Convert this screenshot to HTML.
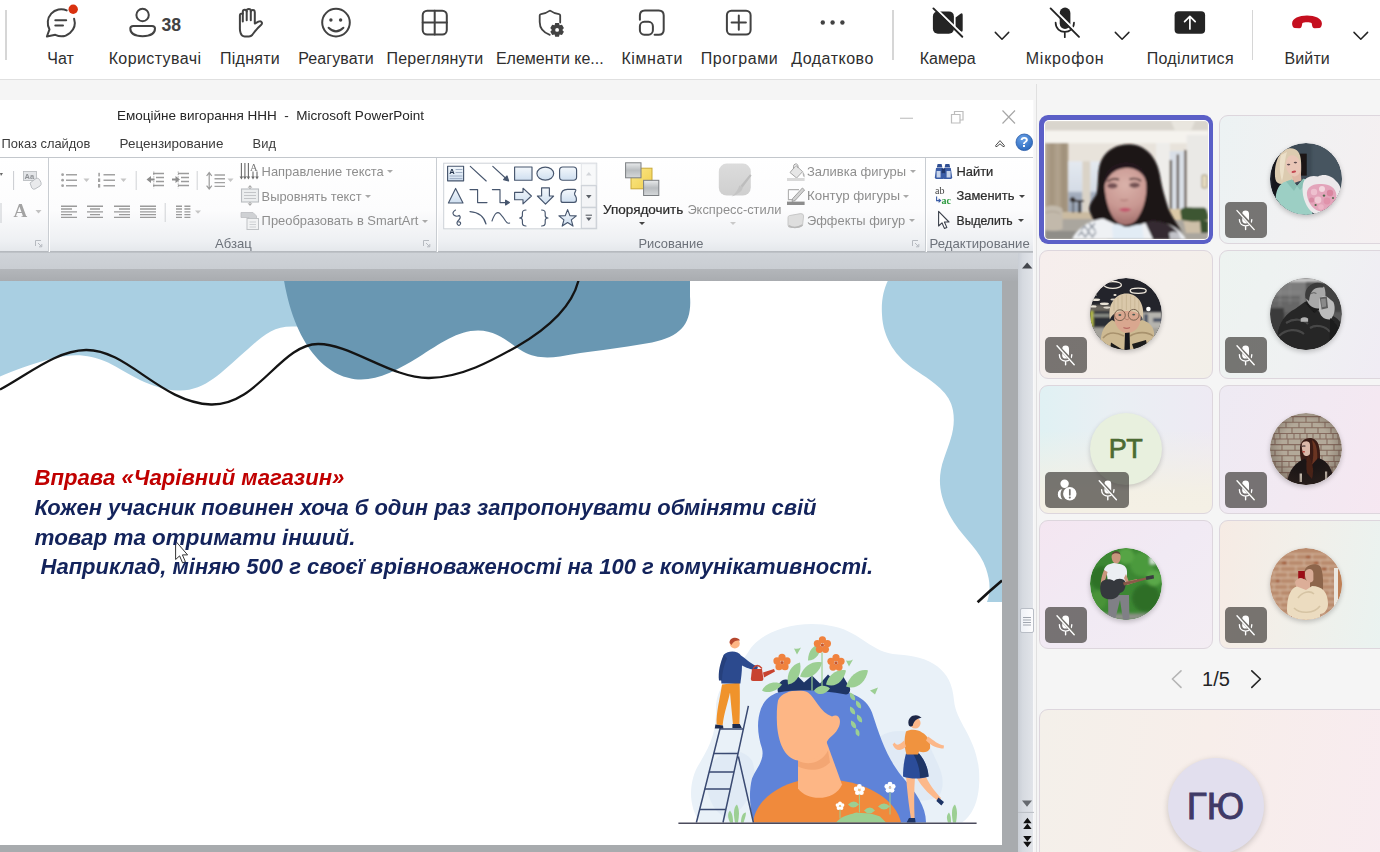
<!DOCTYPE html>
<html lang="uk">
<head>
<meta charset="utf-8">
<title>Teams meeting</title>
<style>
*{box-sizing:border-box;margin:0;padding:0}
html,body{width:1380px;height:852px;overflow:hidden;background:#f5f5f5;font-family:"Liberation Sans",sans-serif;color:#242424}
#app{position:relative;width:1380px;height:852px;overflow:hidden;background:#f5f5f5}
.abs{position:absolute}
/* ---------- Teams toolbar ---------- */
#tb{position:absolute;left:0;top:0;width:1380px;height:80px;background:#fff;border-bottom:1px solid #e0e0e0}
.tl{position:absolute;top:48.8px;height:20px;line-height:20px;font-size:16px;color:#2e2e2e;white-space:nowrap;text-align:center;transform:translateX(-50%)}
.sep{position:absolute;top:10px;width:1.5px;height:50px;background:#d6d6d6}
.ic{position:absolute;overflow:visible}
/* ---------- PowerPoint window ---------- */
#ppt{position:absolute;left:0;top:100px;width:1034px;height:752px;background:#fff;overflow:hidden}
/* ---------- Gallery ---------- */
.tile{position:absolute;width:173.4px;height:128.4px;border-radius:9px;border:1px solid #ddd6dd;overflow:hidden}
.mute{position:absolute;width:41.6px;height:35.8px;border-radius:5px;background:rgba(54,52,48,.66)}
.av{position:absolute;left:50px;top:28px;width:72px;height:72px;border-radius:50%;overflow:hidden;box-shadow:0 2px 5px rgba(0,0,0,.22)}
</style>
</head>
<body>
<div id="app">

<!-- TOOLBAR -->
<div id="tb">
<div class="sep" style="left:5px"></div>
<div class="sep" style="left:892px"></div>
<div class="sep" style="left:1251.5px"></div>
<svg class="ic" style="left:0;top:0" width="1380" height="80" viewBox="0 0 1380 80" fill="none" stroke="#424242" stroke-width="2" stroke-linecap="round" stroke-linejoin="round">
<!-- chat -->
<path d="M66.7 10.4 A13.5 13.5 0 0 0 49.5 29.4 L46.9 36.5 L55.3 34.8 A13.5 13.5 0 0 0 74.1 18.7"/>
<path d="M55.3 20.3 H66.2 M55.3 25.6 H63"/>
<circle cx="73.2" cy="9.2" r="4.7" fill="#d9310f" stroke="none"/>
<!-- people -->
<circle cx="142.6" cy="15" r="6.2"/>
<path d="M133.3 26 H152 Q155 26 155 28.6 C155 33.4 150.5 36.2 142.6 36.2 C134.8 36.2 130.3 33.4 130.3 28.6 Q130.3 26 133.3 26 Z"/>
<!-- hand -->
<path d="M239.9 29 V15.6 Q239.9 13.3 242.8 13.4 V11.8 Q242.8 9.8 244.8 9.8 Q246.7 9.8 246.7 11.4 V10.6 Q246.7 8.9 248.8 8.9 Q250.8 8.9 250.8 10.8 V11.6 Q250.8 10 252.9 10 Q254.8 10 254.8 12.2 V23.6 L258.4 21.7 Q260.9 20.6 261.8 22.4 Q262.4 23.8 261 25 C256.2 29 254.6 32 252.2 35 Q251 36.4 249 36.4 H244.6 Q241.6 36.4 240.6 33 Q239.9 31 239.9 29 Z"/>
<path d="M242.8 13.4 V21.4 M246.7 11.4 V20.2 M250.8 11.4 V20.2"/>
<!-- smiley -->
<circle cx="336" cy="22.6" r="13.8"/>
<circle cx="330.9" cy="20" r="1.7" fill="#424242" stroke="none"/>
<circle cx="340.6" cy="20" r="1.7" fill="#424242" stroke="none"/>
<path d="M328.6 27.8 Q336 35 343.4 27.8"/>
<!-- grid -->
<rect x="422.7" y="10.7" width="24.1" height="23.9" rx="4.5"/>
<path d="M434.7 10.7 V34.6 M422.7 22.6 H446.8"/>
<!-- shield + gear -->
<path d="M560.2 22.6 V15.6 Q560.2 14.3 559 14.2 Q554.5 13.8 550.6 10.9 Q550 10.5 549.4 10.9 Q545.5 13.8 541 14.2 Q539.7 14.3 539.7 15.6 V22 C539.7 28.5 543.6 32.6 549.8 34.8" stroke-width="1.8"/>
<g transform="translate(557.1 29.9)" stroke="none" fill="#424242">
<path d="M-1.9 -6.9 L1.9 -6.9 L2.5 -4.6 L4.9 -5.1 L6.8 -1.8 L5.2 0 L6.8 1.8 L4.9 5.1 L2.5 4.6 L1.9 6.9 L-1.9 6.9 L-2.5 4.6 L-4.9 5.1 L-6.8 1.8 L-5.2 0 L-6.8 -1.8 L-4.9 -5.1 L-2.5 -4.6 Z"/>
<circle r="1.9" fill="#fff"/>
</g>
<!-- rooms -->
<path d="M639.9 19.8 V15.6 Q639.9 10.6 644.9 10.6 H658.7 Q663.7 10.6 663.7 15.6 V29.7 Q663.7 34.7 658.7 34.7 H654.6"/>
<rect x="639.9" y="21.8" width="13" height="12.9" rx="4.4"/>
<!-- apps -->
<rect x="726.9" y="10.7" width="23.7" height="23.9" rx="4.5"/>
<path d="M731.6 22.6 H745.9 M738.8 15.5 V29.8"/>
<!-- more -->
<g fill="#424242" stroke="none"><circle cx="822.8" cy="22.5" r="2.2"/><circle cx="832.6" cy="22.5" r="2.2"/><circle cx="842.4" cy="22.5" r="2.2"/></g>
<!-- camera off -->
<g fill="#242424" stroke="none">
<rect x="932.9" y="11.4" width="21" height="22.4" rx="5"/>
<path d="M955.6 17.6 L960.2 13.9 Q962.7 12.4 962.7 15 V30 Q962.7 32.6 960.2 31.1 L955.6 27.4 Z"/>
</g>
<path d="M934.6 7.2 L963.5 35.6" stroke="#fff" stroke-width="2.2" stroke-linecap="butt"/>
<path d="M933.4 8.4 L962.3 36.8" stroke="#242424" stroke-width="1.9"/>
<!-- chevrons -->
<g stroke="#242424" stroke-width="1.5">
<path d="M995.3 32.4 L1002 39.2 L1008.7 32.4"/>
<path d="M1115.3 32.4 L1122.1 39.2 L1128.9 32.4"/>
<path d="M1354 32.4 L1360.8 39.2 L1367.6 32.4"/>
</g>
<!-- mic off -->
<rect x="1059.7" y="7.6" width="10.7" height="21.3" rx="5.3" fill="#242424" stroke="none"/>
<path d="M1055.6 22.6 C1055.6 35 1074 35 1074 22.6 M1064.8 32.2 V37.2" stroke="#242424" stroke-width="1.7"/>
<path d="M1051.8 7.2 L1080.2 35.6" stroke="#fff" stroke-width="2.2" stroke-linecap="butt"/>
<path d="M1050.6 8.4 L1079 36.8" stroke="#242424" stroke-width="1.9"/>
<!-- share -->
<rect x="1174.6" y="11.3" width="30.5" height="22.4" rx="4" fill="#242424" stroke="none"/>
<path d="M1189.9 29 V16.6 M1184.6 21.6 L1189.9 16.3 L1195.2 21.6" stroke="#fff" stroke-width="1.7"/>
<!-- hang up -->
<path d="M1307 15.6 C1299 15.6 1292.3 18.6 1292.1 23.2 C1292 25.4 1292.8 27.6 1294.6 27.9 L1299.2 28.3 C1300.9 28.4 1301.6 27.2 1301.9 25.6 L1302.3 23.2 C1303.6 22 1310.4 22 1311.7 23.2 L1312.1 25.6 C1312.4 27.2 1313.1 28.4 1314.8 28.3 L1319.4 27.9 C1321.2 27.6 1322 25.4 1321.9 23.2 C1321.7 18.6 1315 15.6 1307 15.6 Z" fill="#c50f1f" stroke="none"/>
</svg>
<div class="abs" style="left:161.4px;top:13.6px;font-size:17.6px;font-weight:bold;line-height:22px;color:#424242">38</div>
<div class="tl" style="left:60.5px">Чат</div>
<div class="tl" style="left:155px;letter-spacing:0.4px">Користувачі</div>
<div class="tl" style="left:250px;letter-spacing:0.23px">Підняти</div>
<div class="tl" style="left:336px;letter-spacing:0.1px">Реагувати</div>
<div class="tl" style="left:435px;letter-spacing:0.2px">Переглянути</div>
<div class="tl" style="left:549.8px">Елементи ке...</div>
<div class="tl" style="left:652.2px;letter-spacing:0.55px">Кімнати</div>
<div class="tl" style="left:739.5px;letter-spacing:0.57px">Програми</div>
<div class="tl" style="left:832.5px;letter-spacing:0.5px">Додатково</div>
<div class="tl" style="left:947.7px">Камера</div>
<div class="tl" style="left:1065.1px;letter-spacing:0.77px">Мікрофон</div>
<div class="tl" style="left:1190.3px;letter-spacing:0.3px">Поділитися</div>
<div class="tl" style="left:1307.2px;letter-spacing:0.1px">Вийти</div>

</div>

<!-- POWERPOINT -->
<div id="ppt">
<div class="abs" id="pw" style="left:0;top:-100px;width:1034px;height:852px;filter:blur(.4px)">
<style>
#pw .t{position:absolute;white-space:nowrap;line-height:16px;height:16px;color:#3b3b3b;font-size:13px}
#pw .g{color:#8e8e8e}
#pw .d{color:#2b2b2b;-webkit-text-stroke:.22px #2b2b2b}
#pw .gl{color:#6d727a}
#pw .vs{position:absolute;top:158px;width:2px;height:94px;background:linear-gradient(90deg,#c9cdd2 0 1px,#fff 1px 2px)}
#pw .ss{position:absolute;width:1px;background:#c4c7cb}
#pw .ar{position:absolute;width:0;height:0;border-left:3px solid transparent;border-right:3px solid transparent;border-top:3.5px solid #a9a9a9}
</style>
<!-- title bar -->
<div class="t" style="left:117px;top:108px;font-size:13.5px;color:#262626;white-space:pre">Емоційне вигорання ННН  -  Microsoft PowerPoint</div>
<svg class="abs" style="left:890px;top:104px" width="140" height="26" viewBox="890 104 140 26" fill="none">
<path d="M900 118.3 H913" stroke="#c9c9c9" stroke-width="1.3"/>
<path d="M951.5 114.5 H960 V123 H951.5 Z M954.5 114.5 V111.5 H963 V120 H960" stroke="#bdbdbd" stroke-width="1.2"/>
<path d="M1002.5 110.5 L1015 123.5 M1015 110.5 L1002.5 123.5" stroke="#a6a6a6" stroke-width="1.15"/>
</svg>
<!-- menu -->
<div class="t" style="left:1.6px;top:135.7px;font-size:12.9px">Показ слайдов</div>
<div class="t" style="left:119.6px;top:135.7px;font-size:13.45px">Рецензирование</div>
<div class="t" style="left:252.6px;top:135.7px;font-size:12.9px">Вид</div>
<svg class="abs" style="left:990px;top:132px" width="44" height="22" viewBox="990 132 44 22">
<path d="M995.6 145.6 L1000 140.6 L1004.4 145.6 Q1004.6 147.2 1003 146.4 L1000 143.8 L997 146.4 Q995.4 147.2 995.6 145.6Z" fill="none" stroke="#4a4a4a" stroke-width="1" stroke-linejoin="round"/>
<defs><radialGradient id="hg" cx=".4" cy=".3" r=".8"><stop offset="0" stop-color="#6aa2e8"/><stop offset="1" stop-color="#2563b8"/></radialGradient></defs>
<circle cx="1024.3" cy="142.3" r="8.3" fill="url(#hg)" stroke="#2a5ca8" stroke-width=".8"/>
<text x="1024.3" y="147.4" font-family="Liberation Sans, sans-serif" font-weight="bold" font-size="14" fill="#fff" text-anchor="middle">?</text>
</svg>
<!-- ribbon background -->
<div class="abs" style="left:0;top:157px;width:1034px;height:95px;border-top:1.5px solid #c3c7cc;background:linear-gradient(#ffffff 0,#fcfcfd 55%,#eef0f3 88%,#e4e7eb 100%)"></div>
<div class="abs" style="left:0;top:250.6px;width:1034px;height:2.4px;background:linear-gradient(#b1b5ba,#c2c6cb)"></div>
<div class="vs" style="left:48px"></div>
<div class="vs" style="left:436px"></div>
<div class="vs" style="left:925px"></div>
<!-- group labels -->
<div class="t gl" style="left:215px;top:235.5px;font-size:13.1px">Абзац</div>
<div class="t gl" style="left:638.4px;top:235.5px;font-size:12.9px">Рисование</div>
<div class="t gl" style="left:929.6px;top:235.5px;font-size:13.15px">Редактирование</div>
<!-- dialog launchers -->
<svg class="abs" style="left:0;top:236px" width="1034" height="14" viewBox="0 236 1034 14" fill="none" stroke="#b6bac0" stroke-width="1">
<path d="M35.5 246 V240.5 H41 M38 243 L41.5 246.5 M41.8 244 V246.8 H39"/>
<path d="M423.5 246 V240.5 H429 M426 243 L429.5 246.5 M429.8 244 V246.8 H427"/>
<path d="M912.5 246 V240.5 H918 M915 243 L918.5 246.5 M918.8 244 V246.8 H916"/>
</svg>
<!-- paragraph text buttons -->
<div class="t g" style="left:261.6px;top:163.7px;font-size:12.9px">Направление текста</div><div class="ar" style="left:387px;top:170px"></div>
<div class="t g" style="left:261.6px;top:188.5px;font-size:12.85px">Выровнять текст</div><div class="ar" style="left:365px;top:195px"></div>
<div class="t g" style="left:261.6px;top:213.4px;font-size:12.93px">Преобразовать в SmartArt</div><div class="ar" style="left:422px;top:220px"></div>
<!-- drawing text -->
<div class="t d" style="left:603px;top:202px;font-size:13.5px">Упорядочить</div><div class="ar" style="left:639px;top:222px;border-top-color:#444"></div>
<div class="t g" style="left:687.4px;top:202px;font-size:12.85px">Экспресс-стили</div><div class="ar" style="left:730px;top:222px;border-top-color:#c9c9c9"></div>
<div class="t g" style="left:807px;top:163.5px;font-size:12.98px">Заливка фигуры</div><div class="ar" style="left:910px;top:170px"></div>
<div class="t g" style="left:807px;top:188px;font-size:13.3px">Контур фигуры</div><div class="ar" style="left:903px;top:195px"></div>
<div class="t g" style="left:807px;top:212.5px;font-size:12.9px">Эффекты фигур</div><div class="ar" style="left:909px;top:219px"></div>
<!-- editing text -->
<div class="t d" style="left:956.5px;top:163.5px;font-size:12.9px">Найти</div>
<div class="t d" style="left:956.5px;top:188px;font-size:12.9px">Заменить</div><div class="ar" style="left:1019px;top:194.5px;border-top-color:#444"></div>
<div class="t d" style="left:956.5px;top:212.5px;font-size:12.2px">Выделить</div><div class="ar" style="left:1018px;top:219px;border-top-color:#444"></div>
<svg class="abs" style="left:0;top:158px" width="1034" height="94" viewBox="0 158 1034 94" fill="none">
<defs>
<linearGradient id="shf" x1="0" y1="0" x2="0" y2="1"><stop offset="0" stop-color="#f4f8fc"/><stop offset="1" stop-color="#cfdff0"/></linearGradient>
<linearGradient id="gsq" x1="0" y1="0" x2="0" y2="1"><stop offset="0" stop-color="#e9ebec"/><stop offset=".5" stop-color="#b9bdc0"/><stop offset="1" stop-color="#d5d8da"/></linearGradient>
<linearGradient id="ysq" x1="0" y1="0" x2="1" y2="1"><stop offset="0" stop-color="#fbe88a"/><stop offset="1" stop-color="#f0cf4e"/></linearGradient>
<linearGradient id="exg" x1="0" y1="0" x2="0" y2="1"><stop offset="0" stop-color="#dcdcdc"/><stop offset="1" stop-color="#cfcfcf"/></linearGradient>
</defs>
<!-- font group remnants -->
<path d="M0 173 L3 173 L1 176 Z" fill="#666"/>
<path d="M1 203 V223 M13.6 171 V190" stroke="#c9ccd0" stroke-width="1"/>
<rect x="23.5" y="171.5" width="13" height="9" fill="#e3e5e8" stroke="#b4b7bb" stroke-width=".8"/>
<text x="24.5" y="179" font-family="Liberation Sans, sans-serif" font-size="7.5" font-weight="bold" fill="#8f9296">Aa</text>
<path d="M30 183 L36 178.5 Q38 177.5 39.5 179.5 L41 182.5 Q41.8 184.5 40 186 L35 189 Q33 189.8 31.8 188 Z" fill="#e9eaec" stroke="#b6b9bd" stroke-width=".9"/>
<text x="13.5" y="217.3" font-family="Liberation Serif, serif" font-size="19" font-weight="bold" fill="#a3a3a3">A</text>
<path d="M35.5 210 h6 l-3 3.4z" fill="#c2c2c2"/>
<!-- paragraph row 1 -->
<g stroke="#a2a2a2" stroke-width="1.4">
<path d="M66 174.7 H77 M66 180.2 H77 M66 185.7 H77"/>
<path d="M103.5 174.7 H115 M103.5 180.2 H115 M103.5 185.7 H115"/>
</g>
<g fill="#a2a2a2"><circle cx="62.6" cy="174.7" r="1.4"/><circle cx="62.6" cy="180.2" r="1.4"/><circle cx="62.6" cy="185.7" r="1.4"/>
<rect x="98.3" y="172.8" width="1.6" height="3.6"/><rect x="98" y="178.4" width="2.2" height="3.6"/><rect x="98" y="184" width="2.2" height="3.6"/></g>
<path d="M83.5 178.6 h6 l-3 3.4z M120.5 178.6 h6 l-3 3.4z M227.5 178.6 h6 l-3 3.4z" fill="#c6c6c6"/>
<path d="M136.2 171 V190 M197.2 171 V190 M165.2 203 V222" stroke="#d0d2d5" stroke-width="1"/>
<!-- indent icons -->
<g stroke="#9b9b9b" stroke-width="1.5">
<path d="M153 173.5 H164 M156 177.5 H164 M156 181.5 H164 M153 185.5 H164"/>
<path d="M178 173.5 H189 M181 177.5 H189 M181 181.5 H189 M178 185.5 H189"/>
</g>
<path d="M146.5 179.5 L151 176 V178.6 H154.5 V180.4 H151 V183Z M180 179.5 L175.5 176 V178.6 H172 V180.4 H175.5 V183Z" fill="#8d8d8d"/>
<path d="M153.8 171.5 V188.5 M178.2 171.5 V188.5" stroke="#8d8d8d" stroke-width=".8" stroke-dasharray="1.2 1.2"/>
<!-- line spacing -->
<g stroke="#a2a2a2" stroke-width="1.4"><path d="M214.5 175 H225 M214.5 178.8 H225 M214.5 182.6 H225 M214.5 186.4 H225"/></g>
<path d="M209.2 173 V188.5 M206.6 176 L209.2 172.6 L211.8 176 M206.6 185.6 L209.2 189 L211.8 185.6" stroke="#9b9b9b" stroke-width="1.2"/>
<!-- align row -->
<g stroke="#9a9a9a" stroke-width="1.35">
<path d="M61 206.2 H77 M61 209 H72 M61 211.8 H77 M61 214.6 H72 M61 217.4 H77"/>
<path d="M87 206.2 H103 M90 209 H100 M87 211.8 H103 M90 214.6 H100 M87 217.4 H103"/>
<path d="M114 206.2 H130 M119 209 H130 M114 211.8 H130 M119 214.6 H130 M114 217.4 H130"/>
<path d="M140 206.2 H156 M140 209 H156 M140 211.8 H156 M140 214.6 H156 M140 217.4 H156"/>
<path d="M176 206.2 H182 M176 209 H182 M176 211.8 H182 M176 214.6 H182 M176 217.4 H182 M184.4 206.2 H190.4 M184.4 209 H190.4 M184.4 211.8 H190.4 M184.4 214.6 H190.4 M184.4 217.4 H190.4"/>
</g>
<path d="M195 210.4 h6 l-3 3.4z" fill="#c6c6c6"/>
<!-- text direction icon -->
<g stroke="#6a6a6a" stroke-width="1.1">
<path d="M241.4 163 V177.5 M244.9 163 V177.5 M248.4 163 V177.5"/>
<path d="M253 171.5 V177 M257 171.5 V177"/>
</g>
<path d="M239.6 176.5 h3.6 l-1.8 3z M243.1 176.5 h3.6 l-1.8 3z M246.6 176.5 h3.6 l-1.8 3z M251.2 176.5 h3.6 l-1.8 3z M255.2 176.5 h3.6 l-1.8 3z" fill="#6a6a6a"/>
<text x="250" y="171" font-family="Liberation Serif, serif" font-size="10.5" fill="#777">A</text>
<!-- align text icon -->
<rect x="241.5" y="189" width="17" height="13" fill="#eceeef" stroke="#b9bcc0" stroke-width="1.1"/>
<path d="M244 192.5 H256 M244 195.5 H256 M244 198.5 H256" stroke="#c3c5c8" stroke-width="1"/>
<path d="M250 186 V189 M248.3 187.6 L250 185.6 L251.7 187.6 M250 202 V205 M248.3 203.4 L250 205.4 L251.7 203.4" stroke="#9d9d9d" stroke-width="1"/>
<!-- smartart icon -->
<path d="M241 212.5 H253 L256.5 216 V220 H249 V217.5 H241Z" fill="#cfd1d4" stroke="#bcbec2" stroke-width=".8"/>
<rect x="247" y="218.5" width="11.5" height="11" fill="#f1f2f3" stroke="#bfc2c5" stroke-width="1"/>
<path d="M249.5 222 H256 M249.5 224.5 H256 M249.5 227 H256" stroke="#cdd0d3" stroke-width="1"/>
<!-- shapes gallery -->
<rect x="443.7" y="163.2" width="153" height="65.6" fill="#fff" stroke="#cdd2d8" stroke-width="1"/>
<rect x="581.3" y="163.7" width="14.9" height="21.5" fill="#f8f9fa" stroke="#e1e4e8" stroke-width="1"/>
<rect x="581.3" y="185.7" width="14.9" height="21.5" fill="#f3f4f6" stroke="#c9ced4" stroke-width="1"/>
<rect x="581.3" y="207.7" width="14.9" height="20.6" fill="#f3f4f6" stroke="#c9ced4" stroke-width="1"/>
<path d="M586 175.5 h5.6 l-2.8 -3.4z" fill="#d3d6da"/>
<path d="M586 195 h5.6 l-2.8 3.4z M586 217.5 h5.6 l-2.8 3.4z" fill="#5a5f66"/>
<path d="M585.6 215.2 H592" stroke="#5a5f66" stroke-width="1.1"/>
<g stroke="#47566e" stroke-width="1.15" stroke-linejoin="round" stroke-linecap="round">
<!-- row1 -->
<rect x="447.6" y="166.2" width="16" height="14.6" fill="url(#shf)"/>
<path d="M456 169.5 H462 M456 172.5 H462 M450 176 H462 M450 178.6 H462" stroke-width=".8" stroke="#8fa0b8"/>
<path d="M470.3 166.3 L486.2 181"/>
<path d="M492.8 166.3 L507.6 180"/>
<path d="M508.6 181 L503.6 179.6 L507 176 Z" fill="#47566e"/>
<rect x="514.6" y="167" width="17.4" height="13.2" fill="url(#shf)"/>
<ellipse cx="545.3" cy="173.6" rx="8.4" ry="6.5" fill="url(#shf)"/>
<rect x="559.6" y="167" width="17" height="13.2" rx="3.2" fill="url(#shf)"/>
<!-- row2 -->
<path d="M455.6 188.4 L463 203 H448.4 Z" fill="url(#shf)"/>
<path d="M470 189.6 H477.6 V202.6 H487"/>
<path d="M492.4 189.6 H500 V202.6 H506.5"/>
<path d="M509.4 202.6 L505.6 200.2 V205 Z" fill="#47566e"/>
<path d="M514.6 192.3 H523 V188.2 L531.4 196 L523 203.8 V199.7 H514.6 Z" fill="url(#shf)"/>
<path d="M541.6 187.8 H549.4 V196 H553.6 L545.5 204.2 L537.4 196 H541.6 Z" fill="url(#shf)"/>
<path d="M561 196 Q561 189.4 567.5 189.4 H574.5 Q576.4 189.4 575.6 191 Q573.6 193.6 575.6 196.2 Q576.6 197.6 576.4 200.4 Q576.2 202.4 574 202.4 H563 Q561 202.4 561 200.4 Z" fill="url(#shf)"/>
<!-- row3 -->
<path d="M455.5 210 Q451.5 212.5 453.8 215 Q456.5 217.3 459.2 215.4 Q461.4 217 458.8 220 Q456 222.6 457.6 224.6 Q459.6 226.4 460.6 223.6 Q460.8 221.6 458.6 222"/>
<path d="M470 211.6 Q483 212.6 486 224"/>
<path d="M492 221 Q496 209.6 500 213.6 Q503.6 217.6 505.6 221 Q507.6 224 509.6 223"/>
<path d="M526 210 Q522.4 210 522.4 213 V215.6 Q522.4 218 519.6 218 Q522.4 218 522.4 220.6 V223 Q522.4 226 526 226"/>
<path d="M541.6 210 Q545.2 210 545.2 213 V215.6 Q545.2 218 548 218 Q545.2 218 545.2 220.6 V223 Q545.2 226 541.6 226"/>
<path d="M567.6 209.6 L569.9 215.6 L576.3 215.9 L571.3 219.9 L573 226.1 L567.6 222.6 L562.2 226.1 L563.9 219.9 L558.9 215.9 L565.3 215.6 Z" fill="url(#shf)"/>
</g>
<text x="449.2" y="173.6" font-family="Liberation Sans, sans-serif" font-size="7.5" font-weight="bold" fill="#22324a">A</text>
<!-- arrange icon -->
<rect x="631" y="168.2" width="21" height="20.6" fill="url(#ysq)" stroke="#c9a93a" stroke-width="1"/>
<rect x="625.6" y="162.8" width="15.4" height="15" fill="url(#gsq)" stroke="#7a7e82" stroke-width="1"/>
<rect x="643.6" y="180.3" width="15.2" height="15.2" fill="url(#gsq)" stroke="#7a7e82" stroke-width="1"/>
<!-- express styles icon -->
<rect x="718.8" y="163.6" width="32" height="32" rx="8" fill="url(#exg)"/>
<path d="M751.6 175.4 L742.6 187.6 L740.4 186 L750 174.2 Z" fill="#bdbdbd"/>
<path d="M742.8 187.4 Q742.4 192.6 731.6 196.4 Q738 191.6 739.2 185.6 Z" fill="#c4c4c4"/>
<!-- fill / outline / effects icons -->
<path d="M790 172.5 L796 165.5 L802.6 171.6 L796.6 178 Z" fill="#e6e6e6" stroke="#a8a8a8" stroke-width="1"/>
<path d="M793.6 168.6 Q793 163.4 796.6 164 Q798.6 164.6 798 168" stroke="#9a9a9a" stroke-width="1"/>
<path d="M802.6 171.6 Q805.4 174.6 804.4 177.4 Q802.6 177 802.6 171.6Z" fill="#b4b4b4"/>
<rect x="787" y="178" width="17.6" height="3" fill="#d9d9d9"/>
<path d="M788.4 189.6 H799 M788.4 189.6 V199.6 H796" stroke="#b0b0b0" stroke-width="1.1"/>
<path d="M792.6 198.6 L802.4 188 L804.6 190 L795 200.6 L792 201.4 Z" fill="#d2d2d2" stroke="#9a9a9a" stroke-width=".9"/>
<rect x="787" y="201.6" width="17.6" height="3.4" fill="#8d8d8d"/>
<path d="M789.4 215.6 L800.6 213.6 Q803.4 213.4 803.6 216 L802.6 224.6 Q802 226.8 799.6 227 L790.6 227.6 Q788 227.4 788 225 L788 217.6 Q788 216 789.4 215.6Z" fill="#dedede" stroke="#c4c4c4" stroke-width=".9"/>
<path d="M788.6 225.6 Q795 229.6 802.6 225" stroke="#b8b8b8" stroke-width="1.6"/>
<!-- binoculars -->
<g fill="#2f4f93">
<path d="M937.6 164 h4 l.8 3.4 h-5.6z M945.4 164 h4 l.8 3.4 h-5.6z"/>
<path d="M936 168 h7 l1.2 9.6 q0 1.4 -1.4 1.4 h-6.4 q-1.6 0 -1.6 -1.4z" fill="#3a5ca6"/>
<path d="M943.8 168 h7 l1.4 9.6 q0 1.4 -1.4 1.4 h-6.4 q-1.6 0 -1.6 -1.4z" fill="#3a5ca6"/>
<rect x="941.6" y="168.6" width="3.6" height="4.6" fill="#22386d"/>
</g>
<path d="M936.6 171 h4 v6.4 h-4z M946.6 171 h4 v6.4 h-4z" fill="#dfe8f6" opacity=".85"/>
<!-- replace -->
<text x="935" y="194.4" font-family="Liberation Serif, serif" font-size="10" fill="#444">ab</text>
<text x="941.6" y="203.6" font-family="Liberation Serif, serif" font-size="10" font-weight="bold" fill="#2b9a3e">ac</text>
<path d="M936.6 196.6 V200.6 H940 M938.6 198.8 L940.6 200.6 L938.6 202.4" stroke="#3a5ca6" stroke-width="1.1"/>
<!-- select cursor -->
<path d="M938.6 211.4 V226 L942 222.8 L944.4 228.4 L946.8 227.4 L944.4 222 H949 Z" fill="#fff" stroke="#3a3f4a" stroke-width="1.1" stroke-linejoin="round"/>
</svg>

<!-- editing area background -->
<div class="abs" style="left:0;top:252.5px;width:1034px;height:600px;background:#a8abae"></div>
<div class="abs" style="left:0;top:252.5px;width:1034px;height:17px;background:linear-gradient(#cfd3d8,#c9cdd2)"></div>
<div class="abs" style="left:0;top:269px;width:1018px;height:11.5px;background:linear-gradient(#b3b6ba,#a9acb0)"></div>
<!-- vertical scrollbar -->
<div class="abs" style="left:1017.5px;top:252.5px;width:16.5px;height:600px;background:linear-gradient(90deg,#c9ced5 0,#d6dae0 30%,#e2e5ea 100%)"></div>
<div class="abs" style="left:1033px;top:100px;width:2.6px;height:752px;background:#f8f8f9"></div>
<div class="abs" style="left:1019.5px;top:608px;width:14px;height:25px;background:linear-gradient(90deg,#eef1f6,#fdfdfe);border:1px solid #b9bec6;border-radius:2px"></div>
<svg class="abs" style="left:1017px;top:252px" width="17" height="600" viewBox="1017 252 17 600">
<path d="M1022 268.6 h10.4 l-5.2 -6.2z" fill="#44474d"/>
<path d="M1023 617.5 h8 M1023 620 h8 M1023 622.5 h8 M1023 625 h8" stroke="#a0a6af" stroke-width="1"/>
<path d="M1022 800.6 h10 l-5 6.2z" fill="#666a70"/>
<path d="M1018 812.4 h16" stroke="#b9bdc3" stroke-width="1"/>
<path d="M1023.2 823.2 h8.4 l-4.2 -5.4z M1023.2 829 h8.4 l-4.2 -5.4z M1023.2 836 h8.4 l-4.2 5.4z M1023.2 841.8 h8.4 l-4.2 5.4z" fill="#111"/>
</svg>
<!-- slide -->
<svg class="abs" style="left:0;top:280.5px" width="1002" height="564" viewBox="0 280.5 1002 564">
<rect x="0" y="280" width="1002" height="565" fill="#fff"/>
<!-- light blue top-left -->
<path d="M0 280 H316 V326 H292 C272 326 262 336 244 352 C222 371 205 391 178 390 C150 389 128 372 108 362 C88 353 72 353 52 358 C30 364 14 370 0 376 Z" fill="#a9cfe2"/>
<!-- dark blob -->
<path d="M284 280 H690 V296 C692 322 682 336 652 342 C620 348 585 351 560 356 C545 358 534 357 523 351 C508 342 498 330 478 330 C458 330 440 343 418 357 C398 369 380 379 361 379 C330 379 296 350 284 280 Z" fill="#6997b2"/>
<!-- right blob -->
<path d="M888 280 H1002 V601.6 H987 C991 590 990 580 986 568 C980 550 966 540 954 522 C940 500 936 480 944 458 C950 440 956 428 953 410 C950 392 934 382 916 370 C896 357 883 338 882 314 C881 300 884 288 888 280 Z" fill="#a9cfe2"/>
<!-- black curves -->
<path d="M0 389 C28 374 56 350 86 349.5 C128 349 160 402 211 404 C258 405 280 344 318 343.5 C350 343 392 378 429 377.5 C462 377 492 360 517 346 C548 328 572 306 578.5 280" fill="none" stroke="#141414" stroke-width="2.3"/>
<path d="M977.6 601.8 Q990 590 1002 580" fill="none" stroke="#141414" stroke-width="2.6"/>
<g id="illus">
<!-- pale background blob -->
<path d="M748 652 C760 630 800 618 834 626 C862 632 870 652 898 654 C930 656 952 668 954 700 C956 722 976 736 979 770 C981 800 972 815 962 822 H700 C688 806 688 780 700 762 C712 742 716 730 716 708 C716 684 734 672 748 652Z" fill="#e9f1f8"/>
<path d="M708 770 C716 750 740 744 752 760 C760 780 748 808 728 818 C712 812 704 792 708 770Z M880 736 C896 726 922 730 930 746 C936 762 948 776 940 794 C926 806 896 800 884 780 C876 764 874 748 880 736Z" fill="#dde8f4" opacity=".8"/>
<!-- hair -->
<path d="M778 692 C790 687 806 687 822 688 C850 690 866 696 872 712 C880 736 886 756 902 776 C916 792 926 806 926 822 H754 C749 806 749 790 752 778 C756 768 765 760 762 748 C758 736 756 722 761 708 C765 698 772 694 778 692Z" fill="#5f83d8"/>
<!-- shirt -->
<path d="M753 822 C756 800 776 786 800 780 L840 780 C870 784 896 800 901 822Z" fill="#f08a3c"/>
<!-- neck + face -->
<path d="M798 752 L826 740 L842 784 C836 800 808 802 798 788Z" fill="#fdb685"/>
<path d="M778 700 C782 690 800 688 808 692 C816 698 820 712 832 716 C840 712 842 722 838 728 C834 736 828 736 826 744 C822 756 810 762 798 760 C784 758 778 740 777 724 C776.6 714 776.8 706 778 700Z" fill="#fdb685"/>
<path d="M798 760 C808 766 822 762 828 750 L830 762 C820 772 806 770 798 766Z" fill="#f3a673"/>
<!-- navy leaves band on head -->
<path d="M778 692 C776 684 782 676 790 680 L796 674 L804 682 L812 675 L820 683 L828 674 L836 682 L842 674 L848 684 C852 688 850 694 846 694 C824 690 800 688 778 692Z" fill="#1e3566"/>
<!-- green leaves -->
<g fill="#9ccf93">
<path d="M762 690 C766 682 776 680 782 684 C778 690 768 694 762 690Z"/>
<path d="M788 684 C786 672 792 664 800 662 C802 672 798 682 788 684Z"/>
<path d="M800 676 C804 664 814 660 822 662 C820 672 810 680 800 676Z"/>
<path d="M808 660 C808 650 814 644 820 644 C822 652 816 660 808 660Z"/>
<path d="M826 684 C828 674 838 668 846 670 C844 680 836 688 826 684Z"/>
<path d="M846 686 C850 674 860 668 868 670 C866 682 856 690 846 686Z"/>
<path d="M814 690 C818 684 826 684 830 688 C826 694 818 696 814 690Z"/>
<path d="M870 690 l8 -3 l-3 7z M794 648 l3 6 l4 -7 q-3 2 -7 1z M846 660 l3 6 l4 -7 q-3 2 -7 1z"/>
<path d="M850 692 q6 2 5 8 q-6 -1 -5 -8z M856 700 q6 2 5 8 q-6 -1 -5 -8z M850 706 q6 2 5 8 q-6 -1 -5 -8z M857 714 q6 2 5 8 q-6 -1 -5 -8z M851 720 q6 2 5 8 q-6 -1 -5 -8z M856 728 q5 2 3 8 q-5 -2 -3 -8z"/>
</g>
<path d="M812 690 V668 M822 688 V652" stroke="#9ccf93" stroke-width="1.2"/>
<!-- orange flowers -->
<g fill="#f0823e">
<g transform="translate(782 662)"><circle cx="0" cy="-5.2" r="3.6"/><circle cx="5" cy="-1.6" r="3.6"/><circle cx="3" cy="4.2" r="3.6"/><circle cx="-3" cy="4.2" r="3.6"/><circle cx="-5" cy="-1.6" r="3.6"/></g>
<g transform="translate(822.4 644.6)"><circle cx="0" cy="-5.2" r="3.6"/><circle cx="5" cy="-1.6" r="3.6"/><circle cx="3" cy="4.2" r="3.6"/><circle cx="-3" cy="4.2" r="3.6"/><circle cx="-5" cy="-1.6" r="3.6"/></g>
<g transform="translate(836 662.4)"><circle cx="0" cy="-5.2" r="3.6"/><circle cx="5" cy="-1.6" r="3.6"/><circle cx="3" cy="4.2" r="3.6"/><circle cx="-3" cy="4.2" r="3.6"/><circle cx="-5" cy="-1.6" r="3.6"/></g>
</g>
<g fill="#c7552a"><circle cx="782" cy="662" r="1.6"/><circle cx="822.4" cy="644.6" r="1.6"/><circle cx="836" cy="662.4" r="1.6"/></g>
<!-- ladder -->
<g stroke="#3a4a72" stroke-width="1.5" fill="none">
<path d="M696.4 822 L720.6 726 M723 822 L748.4 705.4 M738.4 756 L753.4 822"/>
<path d="M719.8 728.6 H743.4 M713.6 753 H738 M709 771.6 H734 M704.6 788.6 H730.4 M699.6 809 H726"/>
</g>
<!-- man -->
<path d="M722 684 C720 698 716 712 716.6 724 L722.6 725 C724 712 728 702 730 692 C731 704 732 714 733 724 L739.4 724 C740 708 740 694 739.6 682Z" fill="#f0932b"/>
<path d="M715.4 724 l7.6 1 l.4 3 h-8.6z M732.4 723.6 h7.4 l2 3.8 h-9.4z" fill="#1d2b4f"/>
<path d="M724 654 C728 650 738 650 741 655 C748 660 752 664 758 666 L757 669.6 C750 669 746 667 742 665 C742 672 741 678 740.4 683 H721.4 C720.6 672 721 662 724 654Z" fill="#2c4a8e"/>
<path d="M724 654 C720 662 718 672 719 680 L722 680 C722 672 724 664 727 658Z" fill="#26407c"/>
<circle cx="734.8" cy="643" r="5" fill="#fdb685"/>
<path d="M729.6 642.6 C729 636.6 738 635.6 740 640 C736.6 639.6 733 640.6 731.6 644.6Z" fill="#b5472e"/>
<path d="M752 668.6 h10 l1.4 10 q0 2 -2 2 h-8.6 q-2 0 -2 -2z" fill="#c8432f"/>
<path d="M763 672 L774 668.6 L775 671 L764 677Z" fill="#c8432f"/>
<path d="M753 668 q4 -6 9 0" stroke="#c8432f" stroke-width="1.3" fill="none"/>
<!-- woman -->
<path d="M906 774 C907 790 909 806 911 818 L914.6 818 C914 804 914 790 915 776Z" fill="#fcb88a"/>
<path d="M916 776 C922 788 932 796 939 801 L941 797.6 C934 790 928 782 925 774Z" fill="#fcb88a"/>
<path d="M909 817.6 h6 l.6 4.4 h-9z M938.4 797 l5.6 4.6 l-2.6 3.4 l-5 -4.6z" fill="#1e3566"/>
<path d="M906 753 H919 C925 760 928 768 928.6 776 C921 779 910 778.6 903 776 C903 768 904 760 906 753Z" fill="#2b4c99"/>
<path d="M913 753 C917 760 920 768 920 777.4 L928.6 776 C928 768 925 760 919 753Z" fill="#1e3566"/>
<path d="M906 731 C910 728.6 918 728.6 922 732 C928 735 931 742 930 748 C928 752 923 752.6 919 751 L918 754 H906.6 C904 746 904 738 906 731Z" fill="#f0933f"/>
<path d="M904 740 C900 744 897 746 894.6 742 L892.6 744 C896 752 902 750 906 746Z M926 740 C932 746 938 748 943.6 748 L944 745 C938 744 934 740 928 736Z" fill="#fcb88a"/>
<circle cx="915.2" cy="722.6" r="5.4" fill="#fcb88a"/>
<path d="M908.6 724 C906.6 714.6 918 712 921.6 717.6 C918 717.6 914 719.6 912.6 725.6 C911 726.6 909 726 908.6 724Z" fill="#1d2747"/>
<!-- white flowers + greens on shirt -->
<g fill="#9ccf93"><path d="M838 820 C846 812 866 810 880 816 L886 822 H836Z"/><path d="M848 804 q6 -6 11 0 q-6 6 -11 0z M864 810 q6 -6 11 0 q-6 6 -11 0z M878 806 q6 -6 12 0 q-6 6 -12 0z M852 814 q5 -4 9 0 q-5 4 -9 0z"/></g>
<path d="M859.4 792 V812 M890 790 V814 M840 808 V818" stroke="#9ccf93" stroke-width="1"/>
<g fill="#fff">
<g transform="translate(859.4 789.4)"><circle cx="0" cy="-3.4" r="2.4"/><circle cx="3.2" cy="-1" r="2.4"/><circle cx="2" cy="2.8" r="2.4"/><circle cx="-2" cy="2.8" r="2.4"/><circle cx="-3.2" cy="-1" r="2.4"/></g>
<g transform="translate(890 787)"><circle cx="0" cy="-3.4" r="2.4"/><circle cx="3.2" cy="-1" r="2.4"/><circle cx="2" cy="2.8" r="2.4"/><circle cx="-2" cy="2.8" r="2.4"/><circle cx="-3.2" cy="-1" r="2.4"/></g>
<g transform="translate(840 805.4)"><circle cx="0" cy="-2.6" r="1.9"/><circle cx="2.5" cy="-.8" r="1.9"/><circle cx="1.5" cy="2.2" r="1.9"/><circle cx="-1.5" cy="2.2" r="1.9"/><circle cx="-2.5" cy="-.8" r="1.9"/></g>
</g>
<g fill="#f2c98a"><circle cx="859.4" cy="789.4" r="1"/><circle cx="890" cy="787" r="1"/><circle cx="840" cy="805.4" r="1"/></g>
<!-- ground plants -->
<g fill="#9ccf93"><path d="M735 822 C733 812 734 806 737 804 C740 810 739 816 738 822Z M730 822 C727 816 728 812 730 810 C733 814 733 818 733 822Z M741 822 C741 816 743 812 746 812 C746 816 744 820 743.6 822Z M953 822 C951 812 952 806 955 804 C958 810 957 816 956 822Z M948 822 C946 817 947 814 949 812 C951 815 951 818 951 822Z"/></g>
<!-- ground line -->
<path d="M678.4 822.7 H976.6" stroke="#4b4b5c" stroke-width="1.5"/>
</g>

<!-- mouse cursor -->
<path d="M175.6 540.6 V559 L179.6 555.4 L182.6 562.4 L185.4 561.2 L182.4 554.4 H187.6 Z" fill="#fff" stroke="#333" stroke-width="1"/>
</svg>
<style>
#pw .st{position:absolute;white-space:nowrap;font-weight:bold;font-style:italic;color:#13235b;line-height:30px;height:30px}
</style>
<div class="st" style="left:34.5px;top:462.9px;font-size:22.15px;color:#c00000">Вправа «Чарівний магазин»</div>
<div class="st" style="left:34.5px;top:492.8px;font-size:21.96px">Кожен учасник повинен хоча б один раз запропонувати обміняти свій</div>
<div class="st" style="left:34.5px;top:522.6px;font-size:22.43px">товар та отримати інший.</div>
<div class="st" style="left:40.5px;top:552.3px;font-size:22.03px">Наприклад, міняю 500 г своєї врівноваженості на 100 г комунікативності.</div>

</div>

</div>

<!-- divider -->
<div class="abs" style="left:1036px;top:84px;width:1px;height:768px;background:#e0e0e0"></div>

<!-- GALLERY -->
<div id="gal">
<svg width="0" height="0" style="position:absolute">
<defs>
<clipPath id="cc"><circle cx="36" cy="36" r="36"/></clipPath>
<filter id="b1" x="-20%" y="-20%" width="140%" height="140%"><feGaussianBlur stdDeviation="0.9"/></filter>
<filter id="b3" x="-20%" y="-20%" width="140%" height="140%"><feGaussianBlur stdDeviation="0.55"/></filter>
<filter id="b2" x="-20%" y="-20%" width="140%" height="140%"><feGaussianBlur stdDeviation="1.6"/></filter>
<g id="micoff" fill="none" stroke="#fff" stroke-linecap="round">
<rect x="-3.4" y="-9.6" width="6.8" height="13" rx="3.4" fill="#fff" stroke="none"/>
<path d="M-6.2 -0.4 C-6.2 8 6.2 8 6.2 -0.4 M0 6 V9.6" stroke-width="1.4"/>
<path d="M-7.4 -8.6 L9.4 8.8" stroke="#75736f" stroke-width="3.2"/>
<path d="M-8.6 -9.4 L8.6 9.6" stroke-width="1.4"/>
</g>
</defs>
</svg>
<!-- tile 1: active speaker video -->
<div class="abs" style="left:1039.3px;top:115.2px;width:173.6px;height:128.8px;border-radius:9px;background:#5b5fc7"></div>
<div class="abs" style="left:1043.6px;top:119.5px;width:165px;height:120.2px;border-radius:5px;background:#fff"></div>
<svg class="abs" style="left:1044.6px;top:120.5px;border-radius:4px" width="163" height="118.2" viewBox="0 0 163 118.2">
<defs>
<radialGradient id="fg" cx="80" cy="64" r="38" gradientUnits="userSpaceOnUse"><stop offset="0" stop-color="#dab2aa"/><stop offset=".6" stop-color="#c99892"/><stop offset="1" stop-color="#a87572"/></radialGradient>
<linearGradient id="wl" x1="0" y1="0" x2="0" y2="1"><stop offset="0" stop-color="#e4e9f0"/><stop offset=".58" stop-color="#d5dce6"/><stop offset=".62" stop-color="#a3adbd"/><stop offset="1" stop-color="#98a3b3"/></linearGradient>
<linearGradient id="wood" x1="0" y1="0" x2="1" y2="0"><stop offset="0" stop-color="#b3a591"/><stop offset=".3" stop-color="#a3937d"/><stop offset=".55" stop-color="#b2a48f"/><stop offset=".8" stop-color="#9f8f79"/><stop offset="1" stop-color="#ab9c86"/></linearGradient>
</defs>
<rect width="163" height="118.2" fill="#e8e3db"/>
<g filter="url(#b1)">
<rect x="0" y="0" width="163" height="9.6" fill="#d9d5cd"/>
<rect x="0" y="9.6" width="163" height="12.6" fill="#f5f3ee"/>
<path d="M126 0 H150 L146 9.6 H130Z" fill="#e9e6df"/>
<rect x="0" y="22" width="23.3" height="77" fill="url(#wood)"/>
<rect x="23.3" y="40.3" width="14.2" height="51" fill="url(#wl)"/>
<rect x="45.2" y="40.3" width="12" height="51" fill="url(#wl)"/>
<rect x="37.5" y="40.3" width="7.7" height="51" fill="#dad3c7"/>
<rect x="0" y="91" width="163" height="8" fill="#cbbba1"/>
<rect x="0" y="98" width="163" height="21" fill="#aaa69e"/>
<path d="M0 110 H40 V118.2 H0Z" fill="#8f8d88"/>
<path d="M0 86 C5 83.4 14 84 17.6 88 V108 C12 110 5 110 0 108Z" fill="#c2b9ab"/>
<path d="M0 92 C5 90 12 90 15 93" stroke="#a99f90" stroke-width="1" fill="none"/>
<path d="M28.4 79 H39 V81 H36 V92 H33.4 V81 H28.4Z" fill="#302c29"/>
<path d="M27.6 76.4 a2.3 2.3 0 1 0 .1 0z M28.2 78 V92" fill="#302c29" stroke="#302c29" stroke-width="1"/>
<rect x="111" y="22" width="14" height="70" fill="#eeedea"/>
<rect x="124.6" y="30" width="17" height="59" fill="#d9dfe7"/>
<path d="M125.9 39 V89 M132.9 33.4 V89 M140.6 29 V90" stroke="#4e3b2c" stroke-width="2.2"/>
<rect x="141.7" y="14" width="22" height="78" fill="#eae9e6"/>
<rect x="157" y="54" width="5" height="13" rx="1" fill="#e9dfc4" stroke="#7a6a4a" stroke-width=".7"/>
<path d="M120 88 H142 V99 H118Z" fill="#dcc9a6"/>
<path d="M138 98 H163 V112 H141Z" fill="#cdbfa8"/>
<path d="M135.3 91 C135.3 86 140 86 148 86.4 H159 C163 87 163 93 163 99 C158 101 142 101 136.4 98.4Z" fill="#3e5631"/>
<path d="M155 100 H163 V112 H156Z" fill="#39502d"/>
</g>
<g filter="url(#b1)">
<path d="M44.6 90 C43 84 48 79 51.6 73 C54 60 51.6 48 57 38 C63 26.6 76 22 88 23.6 C103 26 112 38 115 54 C117 68 120.6 78 123.6 88 C128 98 136 108 140 118.2 H62 C56 110 48 100 44.6 90Z" fill="#1d1416"/>
<path d="M59.4 64 C58.6 52 65 46 79 46 C94 46 101.6 53 101.4 66 C101.4 80 97 92 91 99.6 C85 105.4 76 105.4 70.6 99.6 C63.6 92 60.4 78 59.4 64Z" fill="url(#fg)"/>
<path d="M59 66 C58 50 66 41 82 41 C95 41 102 49 102.6 64 C100 54 94 48 84 47 C74 46.4 64 50 59 66Z" fill="#20161a"/>
<path d="M62.6 60.6 q5 -4 11.4 -2 M84.6 58.4 q6.4 -2.4 11.4 1.6" stroke="#3a2426" stroke-width="1.7" fill="none"/>
<ellipse cx="67.4" cy="64.8" rx="5.2" ry="2.7" fill="#5b3c40" opacity=".8"/>
<ellipse cx="89.6" cy="64.2" rx="5.2" ry="2.7" fill="#5b3c40" opacity=".8"/>
<path d="M75.4 78.6 q3.6 2 7.4 0" stroke="#a9746f" stroke-width="1.5" fill="none" opacity=".8"/>
<path d="M73.6 88.4 q6.4 -3.4 13 0 q-6.4 4.8 -13 0z" fill="#c2566d"/>
<path d="M72 97 q8 6 17 0" stroke="#a87672" stroke-width="1.4" fill="none" opacity=".7"/>
<path d="M27 118.2 C31 108 44 99 58 97.4 L70 103 C76 111 90 111 96.6 103 L106 100 C122 100 136 108 141 118.2Z" fill="#eff1f4"/>
<path d="M67 106 C70 100.6 76 104 80 106 C86 106.4 92 102 97 104 L99 118.2 H68Z" fill="#e2ecf5"/>
<path d="M36 109 l3.6 -4 l3.6 5 l3.6 -5 l3.6 5 M33 115 l3.6 -4 l3.6 5 l3.6 -5 l3.6 5 l3.6 -5 M44 102 l3 4 l3 -4" stroke="#9299a4" stroke-width="1.4" fill="none"/>
<path d="M100 101 C110 97 124 100 134 113 L136 118.2 H108Z" fill="#241b1e" opacity=".92"/>
<path d="M124 112 q6 -4 12 2 l3 4.2 h-14z" fill="#e6eaf0" opacity=".8"/>
</g>

</svg>
<!-- tiles -->
<div class="tile" style="left:1219.3px;top:115.2px;background:linear-gradient(100deg,#ecf2f3 0%,#f1f1f2 45%,#f5eff1 100%)"></div>
<div class="tile" style="left:1039.3px;top:250.3px;background:linear-gradient(120deg,#f6eeed 0%,#f4efeb 60%,#f2efe8 100%)"></div>
<div class="tile" style="left:1219.3px;top:250.3px;background:linear-gradient(110deg,#edf3f0 0%,#eff1f2 50%,#f0ebf4 100%)"></div>
<div class="tile" style="left:1039.3px;top:385.3px;background:linear-gradient(180deg,rgba(244,240,228,0) 0%,rgba(244,240,228,0) 35%,rgba(244,240,228,.95) 85%,#f4f0e5 100%),linear-gradient(90deg,#e0f1f3 0%,#e9eff3 40%,#eeeaf3 100%)"></div>
<div class="tile" style="left:1219.3px;top:385.3px;background:linear-gradient(110deg,#eeeaf3 0%,#f2e9f2 50%,#f6e7f1 100%)"></div>
<div class="tile" style="left:1039.3px;top:520.4px;background:linear-gradient(140deg,#f4e6f1 0%,#f1eaf4 50%,#f3edf3 100%)"></div>
<div class="tile" style="left:1219.3px;top:520.4px;background:linear-gradient(100deg,#f6ebe4 0%,#f2efe9 40%,#e9f3f1 100%)"></div>
<div class="tile" style="left:1039.3px;top:708.8px;width:360px;height:160px;background:linear-gradient(100deg,#f4f0ea 0%,#f7eeea 45%,#f8ebf0 100%)"></div>
<div class="abs" style="left:1090px;top:413px;width:72px;height:72px;border-radius:50%;background:#e8f0de;box-shadow:0 2px 5px rgba(0,0,0,.18)"></div>
<div class="abs" style="left:1090px;top:413px;width:72px;line-height:72px;text-align:center;font-size:27px;color:#4c6b33;letter-spacing:.6px;-webkit-text-stroke:.7px #4c6b33">РТ</div>
<!-- mute badges -->
<div class="mute" style="left:1225px;top:202px"></div>
<div class="mute" style="left:1045px;top:337.2px"></div>
<div class="mute" style="left:1225px;top:337.2px"></div>
<div class="mute" style="left:1045px;top:472.2px;width:84.4px"></div>
<div class="mute" style="left:1225px;top:472.2px"></div>
<div class="mute" style="left:1045px;top:607.2px"></div>
<div class="mute" style="left:1225px;top:607.2px"></div>
<svg class="abs" style="left:1036px;top:100px" width="344" height="560" viewBox="1036 100 344 560">
<use href="#micoff" x="1245.6" y="220"/>
<use href="#micoff" x="1065.6" y="355.2"/>
<use href="#micoff" x="1245.6" y="355.2"/>
<use href="#micoff" x="1107.8" y="490.2"/>
<use href="#micoff" x="1245.6" y="490.2"/>
<use href="#micoff" x="1065.6" y="625.2"/>
<use href="#micoff" x="1245.6" y="625.2"/>
<!-- people alert icon -->
<g fill="#fff">
<circle cx="1064.6" cy="483.7" r="4.2"/>
<path d="M1061.6 489.4 A5.4 5.4 0 0 0 1061.6 499.2 A7.6 7.6 0 0 1 1061.6 489.4Z" transform="translate(-0.6 0)"/>
<path d="M1062.4 489 C1060 491.6 1060 496.6 1062.4 499.4 C1056.6 498.6 1056.2 490 1062.4 489Z"/>
<circle cx="1069.8" cy="493.8" r="6.7"/>
</g>
<path d="M1069.8 489.8 V494.8" stroke="#75736f" stroke-width="1.7" stroke-linecap="round"/>
<circle cx="1069.8" cy="497.6" r="1.05" fill="#75736f"/>
</svg>
<!-- initials avatars -->
<div class="abs" style="left:1167.5px;top:758px;width:96px;height:96px;border-radius:50%;background:#e2dfee;box-shadow:0 2px 6px rgba(0,0,0,.18)"></div>
<div class="abs" style="left:1167.5px;top:758px;width:96px;line-height:97px;text-align:center;font-size:37px;color:#3f3a66;-webkit-text-stroke:.9px #3f3a66">ГЮ</div>
<!-- pagination -->
<div class="abs" style="left:1196px;top:667px;width:40px;line-height:24px;text-align:center;font-size:20px;color:#242424">1/5</div>
<svg class="abs" style="left:1165px;top:665px" width="110" height="28" viewBox="1165 665 110 28" fill="none" stroke-width="1.6" stroke-linecap="round" stroke-linejoin="round">
<path d="M1181 670.8 L1172.4 679 L1181 687.4" stroke="#b5b5b5"/>
<path d="M1251.8 670.8 L1260.4 679 L1251.8 687.4" stroke="#242424"/>
</svg>
<style>.avs{position:absolute;border-radius:50%;box-shadow:0 2px 5px rgba(0,0,0,.22)}</style>
<!-- A: blonde woman with bouquet -->
<svg class="avs" style="left:1270px;top:143px" width="72" height="72" viewBox="0 0 72 72"><g clip-path="url(#cc)">
<rect width="72" height="72" fill="#3d4a55"/>
<g filter="url(#b2)">
<path d="M0 0 H13 V72 H0Z" fill="#15161a"/>
<path d="M42 0 H72 V42 H42Z" fill="#475561"/>
</g>
<g filter="url(#b3)">
<rect x="29.4" y="10.6" width="7.4" height="22" fill="#1d1919"/>
<path d="M5.4 36 C3.6 22 8 8 18.6 5.4 C27 4.4 30.6 10 31 18 C31.4 24 31.2 30 30.8 33 L24 37 L13 41 C9 41.4 6 39.6 5.4 36Z" fill="#dccbb0"/>
<path d="M11 12 C9 20 9.6 30 12 38 C14.6 30 14 18 17 9Z" fill="#ebdfc8"/>
<path d="M21.4 31 L30.4 27.6 L31.4 37.4 L24 40Z" fill="#e0b8a6"/>
<ellipse cx="23.4" cy="22.8" rx="7.5" ry="10.7" transform="rotate(-12 23.4 22.8)" fill="#e9c6b7"/>
<ellipse cx="18.6" cy="21.6" rx="1.7" ry=".8" fill="#5d4d50"/><ellipse cx="25.4" cy="19.6" rx="1.7" ry=".8" fill="#5d4d50"/>
<ellipse cx="23.8" cy="28.8" rx="2.3" ry="1.05" transform="rotate(-12 23.8 28.8)" fill="#c3454f"/>
<path d="M5.6 60 C5 46 10 40.4 16 38.6 L22 36.4 L27 43 L33.4 35.8 C37 36.4 40 40 41 46 L42.4 72 H12 C8 70 6 66 5.6 60Z" fill="#9ccfc4"/>
<path d="M16 38.6 L22 36.4 L27 43 L24 48Z M27 43 L33.4 35.8 L36 41 L30 47Z" fill="#89c0b4"/>
<path d="M33 41 C34 34 42 31.6 48 33.6 C54 30 62 33 66 38 C71.4 42 72 50 69.4 56 C66 64 58 70 48 72.4 C40 70 35 62 33 52 C32.4 47 32.4 44 33 41Z" fill="#ece9eb"/>
<path d="M37 52 C36 45 42 40.6 50 41 C58 40.4 66 44 66.4 52 C67 60 60 67 52 68.4 C44 68.6 38 60 37 52Z" fill="#e3a4ba"/>
<circle cx="44" cy="49" r="3.2" fill="#eec0cf"/><circle cx="52" cy="46" r="3" fill="#f3d6de"/><circle cx="60" cy="50" r="3.2" fill="#d9859f"/><circle cx="48" cy="57" r="3.4" fill="#f0c9d4"/><circle cx="57" cy="58" r="3.4" fill="#e093ab"/><circle cx="51" cy="64" r="2.8" fill="#ecb5c6"/><circle cx="41.6" cy="57" r="2.6" fill="#d88aa3"/>
<circle cx="54" cy="52.6" r="1.2" fill="#4e6a4a"/><circle cx="45.6" cy="62" r="1.1" fill="#4e6a4a"/><circle cx="63" cy="55" r="1" fill="#4e6a4a"/>
</g></g></svg>
<!-- B: beanie + puffer -->
<svg class="avs" style="left:1090px;top:278px" width="72" height="72" viewBox="0 0 72 72"><g clip-path="url(#cc)">
<rect width="72" height="72" fill="#23242b"/>
<g filter="url(#b1)">
<path d="M0 49 H72 V72 H0Z" fill="#a3a19a"/>
<path d="M0 32.4 H20 V49.4 H0Z" fill="#2b2d34"/>
<path d="M0 32 H3.4 V49 H0Z" fill="#b9c04a"/>
<path d="M3.4 36 H20 V39 H3.4Z" fill="#8a8d86"/>
<path d="M52 34 H72 V50 H52Z" fill="#b5b4ae"/>
<path d="M54 36 H58 V46 H54Z M63 40 H72 V44 H63Z" fill="#4a5366"/>
<path d="M0 27 H22 V33 H0Z" fill="#6a665e"/>
</g>
<g filter="url(#b3)">
<ellipse cx="22.8" cy="6.9" rx="8.6" ry="3.4" fill="none" stroke="#f0eade" stroke-width="1.3"/>
<ellipse cx="48.2" cy="12.8" rx="8" ry="2.6" fill="none" stroke="#f0eade" stroke-width="1.3"/>
<ellipse cx="6" cy="21.8" rx="4.2" ry="1.3" fill="#e9e3d7"/><ellipse cx="14.4" cy="25.8" rx="4.6" ry="1.3" fill="#e9e3d7"/><ellipse cx="3" cy="28.4" rx="3.6" ry="1.2" fill="#e9e3d7"/><ellipse cx="17" cy="29.6" rx="3.6" ry="1.1" fill="#dcd6ca"/><ellipse cx="5" cy="17" rx="2" ry=".8" fill="#cfc9bd"/><ellipse cx="25" cy="17" rx="1.6" ry=".9" fill="#e9e3d7"/><ellipse cx="23" cy="21.4" rx="2.6" ry="1" fill="#d6d0c4"/>
<circle cx="58.4" cy="31" r="2.3" fill="#fff"/>
<path d="M11 72 C9.6 58 12 48 22 42 L30 46 L44 46 L52 42 C60 44 65 50 64 58 L62 72Z" fill="#cdb992"/>
<path d="M13 60 C18 54 26 54 34 58 M40 58 C48 53 58 54 63 58" stroke="#a8926d" stroke-width="1.6" fill="none"/>
<path d="M23.9 38 C23.6 32 28 30 36.6 30 C46 30 50.8 32 50.8 39 C50.8 48 45 55 37.4 55 C30 55 24.4 48 23.9 38Z" fill="#d9a78f"/>
<path d="M19.8 41.6 C17.6 25 26 15.4 36.4 15.4 C47 15.4 55.4 25 52.8 41 C50.6 35.6 46 33 36.4 33 C27 33 22.4 35.6 19.8 41.6Z" fill="#dac8aa"/>
<path d="M24 22 V33 M28 19 V32 M32 17.4 V32 M36.4 16.6 V32 M40.6 17.4 V32 M44.8 19 V32 M48.8 22 V33" stroke="#c5b292" stroke-width=".8"/>
<circle cx="29.9" cy="37.2" r="5.4" fill="none" stroke="#6f5a48" stroke-width=".9"/><circle cx="43.7" cy="36.8" r="5.4" fill="none" stroke="#6f5a48" stroke-width=".9"/>
<ellipse cx="29.9" cy="37" rx="1.5" ry=".9" fill="#4a5a52"/><ellipse cx="43.7" cy="36.6" rx="1.5" ry=".9" fill="#4a5a52"/>
<path d="M35 40.6 q2 2.6 4.2 0" stroke="#b9826e" stroke-width="1" fill="none"/>
<path d="M33.4 49.6 q3.4 1.6 6.6 0" stroke="#b86a62" stroke-width="1.1" fill="none"/>
<path d="M35 55 L39.6 54.4 L40 72 H34.4Z" fill="#17171a"/>
<path d="M21 64.6 L33 72 H20Z M42 66 L56 62 L58 72 H44Z" fill="#1f1d1b"/>
</g></g></svg>
<!-- C: black & white -->
<svg class="avs" style="left:1270px;top:278px" width="72" height="72" viewBox="0 0 72 72"><g clip-path="url(#cc)">
<rect width="72" height="72" fill="#5a5a5a"/>
<g filter="url(#b1)">
<path d="M0 0 H72 V4 H0Z" fill="#c6c6c6"/>
<path d="M0 4 H36 V30 H0Z" fill="#7d7d7d"/>
<path d="M0 18 H30 V34 H0Z" fill="#666"/>
<path d="M52 4 H72 V34 H52Z" fill="#424242"/>
<path d="M0 30 H14 V72 H0Z" fill="#3a3a3a"/>
<path d="M10 8 V28 M20 6 V26 M2 14 H32 M2 22 H30" stroke="#8e8e8e" stroke-width=".8"/>
</g>
<g filter="url(#b3)">
<path d="M7 72 C5.6 50 12 38 25 31 L34.6 24 L44 31 L54 36 C64 36 70 42 72 48 V72Z" fill="#262626"/>
<path d="M34.6 24 L41 22 L50 31 L44 35Z" fill="#1a1a1a"/>
<path d="M9 58 C16 51 27 50 34 56 M16 45 C24 40 33 41 38 46 M40 50 C46 46 56 48 60 54" stroke="#474747" stroke-width="2.2" fill="none"/>
<path d="M36.6 14 C37.6 5 50 3 54.4 9.6 C56.6 16 55.6 25 50.6 30 C45 32 38 28 36.4 21Z" fill="#a8a8a8"/>
<path d="M35.4 20 C33.6 8 44 2.6 52 5.4 C54.4 7 54 9 52.4 9.6 C45 8.4 40 12 39 23Z" fill="#3a3a3a"/>
<path d="M41 15.4 q3 -1.4 5.4 0" stroke="#555" stroke-width=".9" fill="none"/>
<path d="M49 22 C50 17.6 56 17 58 19.6 L63.4 24 C66 30 64.4 38 60.4 41.4 C54 42 50 38 49 32Z" fill="#bcbcbc"/>
<path d="M49.8 19.4 L56.8 18.4 L58 30 L51.6 31.4Z" fill="#5e5e5e"/>
<path d="M51 21 l4.6 -.6 l.6 8 l-4.4 .8z" fill="#8a8a8a"/>
<path d="M30.7 40.4 q3.6 -2.2 7.4 0 v3.4 h-7.4z" fill="#b2b2b2"/>
<path d="M60 40 C66 44 70 52 72 60 V72 H58 C60 62 60 50 60 40Z" fill="#1e1e1e"/>
</g></g></svg>
<!-- D: light brick wall -->
<svg class="avs" style="left:1270px;top:413px" width="72" height="72" viewBox="0 0 72 72"><defs><radialGradient id="vg" cx=".5" cy=".45" r=".6"><stop offset=".55" stop-color="#3a2a22" stop-opacity="0"/><stop offset="1" stop-color="#3a2a22" stop-opacity=".42"/></radialGradient></defs><g clip-path="url(#cc)">
<rect width="72" height="72" fill="#b3a999"/>
<g stroke="#856b5e" stroke-width="1.05" filter="url(#b3)">
<path d="M0 3.6 H72 M0 9.2 H72 M0 14.8 H72 M0 20.4 H72 M0 26 H72 M0 31.6 H72 M0 37.2 H72 M0 42.8 H72 M0 48.4 H72 M0 54 H72 M0 59.6 H72 M0 65.2 H72"/>
<path d="M23 3.6 V9.2 M36 3.6 V9.2 M49 3.6 V9.2 M16 9.2 V14.8 M29 9.2 V14.8 M42 9.2 V14.8 M55 9.2 V14.8 M9 14.8 V20.4 M22 14.8 V20.4 M35 14.8 V20.4 M48 14.8 V20.4 M61 14.8 V20.4 M4 20.4 V26 M10 20.4 V26 M17 20.4 V26 M24 20.4 V26 M30 20.4 V26 M37 20.4 V26 M43 20.4 V26 M50 20.4 V26 M56 20.4 V26 M63 20.4 V26 M68 20.4 V26 M5 26 V31.6 M18 26 V31.6 M31 26 V31.6 M44 26 V31.6 M57 26 V31.6 M69 26 V31.6 M12 31.6 V37.2 M25 31.6 V37.2 M51 31.6 V37.2 M64 31.6 V37.2 M5 37.2 V42.8 M18 37.2 V42.8 M57 37.2 V42.8 M69 37.2 V42.8 M12 42.8 V48.4 M25 42.8 V48.4 M52 42.8 V48.4 M64 42.8 V48.4 M5 48.4 V54 M12 48.4 V54 M19 48.4 V54 M26 48.4 V54 M58 48.4 V54 M65 48.4 V54 M12 54 V59.6 M24 54 V59.6 M62 54 V59.6 M18 59.6 V65.2 M60 59.6 V65.2"/>
</g>
<g filter="url(#b3)">
<path d="M30 36 C29.6 28 36 24 42.6 25.4 C49 27 50.4 36 50 46 C50 56 47 61 40 60 C33 58 29.6 46 30 36Z" fill="#3b1d15"/>
<path d="M42 27 C47 30 48 40 47 52 C46 58 43 60 40 58 C44 48 44 36 42 27Z" fill="#6a3422"/>
<path d="M32 30.6 C34 27.4 39.6 27.4 40 31.6 V40.4 C39 43.6 35.4 44 33.6 41.4 C32 38.4 31.4 33.4 32 30.6Z" fill="#dcb9a9"/>
<path d="M32 33.4 h3.4 M31.8 33.4 q1.6 -1.4 3.6 -.6" stroke="#4a3a3a" stroke-width=".7" fill="none"/>
<path d="M32.4 38 h2.4 v1.5 h-2.4z" fill="#b8453e"/>
<path d="M16.6 72 C18 56 27 48.6 35 45.4 L40 54 L48 45 C58 47.6 63 56 64.4 72Z" fill="#1f1518"/>
<path d="M38 42 C41 46 45 56 42 66 L37 60 C36 54 36 48 38 42Z" fill="#4a2217"/>
<path d="M29.6 60.4 h2.4 v8.6 h-2.4z M55 58.4 h2.2 v8.6 h-2.2z" fill="#d3cabd"/>
</g>
<rect width="72" height="72" fill="url(#vg)"/>
</g></svg>
<!-- E: man with guitar -->
<svg class="avs" style="left:1090px;top:548px" width="72" height="72" viewBox="0 0 72 72"><g clip-path="url(#cc)">
<rect width="72" height="72" fill="#3c8733"/>
<g filter="url(#b2)">
<circle cx="12" cy="30" r="12" fill="#2f7228"/><circle cx="52" cy="16" r="12" fill="#4c9a3c"/><circle cx="56" cy="50" r="14" fill="#2d6e27"/><circle cx="36" cy="8" r="8" fill="#56a445"/><circle cx="8" cy="52" r="9" fill="#4a9339"/><circle cx="64" cy="30" r="8" fill="#5aa848"/>
<path d="M0 65.6 H72 V72 H0Z" fill="#8c9187"/>
<path d="M60 8 h8 v8 h-8z" fill="#cfe4d0"/>
</g>
<g filter="url(#b3)">
<path d="M21.6 9 C21.6 3 29.6 2 30.6 8 C31 12 29 15.6 26.4 15.8 C23.6 15.8 21.8 12.6 21.6 9Z" fill="#c9967d"/>
<path d="M21.6 7 C22 2.4 29.6 1.6 30.6 6.6 C27 4.6 24 5 21.6 7Z" fill="#5d4437"/>
<path d="M14 22 C15 17 20 15.6 24 15 L30 16 C35 17 37.6 20 37 26 L36.4 35 H18 L17 27Z" fill="#eceef3"/>
<path d="M14 22 L17.6 24 L14 36 L24 43 L22 46 L11 39 C10 34 12 27 14 22Z" fill="#c9967d"/>
<path d="M36 26 L38.6 33 L47 31 L47.6 33.6 L37 37 L34 30Z" fill="#c9967d"/>
<path d="M18 47 H39 L39.4 72 H33 L30 52 L25 72 H18.4Z" fill="#808086"/>
<path d="M10.6 36 C12 31 20 30 24 33 C27 29.6 34 30 35.4 34 C36 40 34 44 30 45 C27 52 18 53 13 49 C10 46 10 40 10.6 36Z" fill="#34373d"/>
<path d="M33 34.6 L56 29.6 L56.6 31.6 L34 37.6Z" fill="#8b5a48"/>
<path d="M55.6 28.4 L63.6 27 L64 30.4 L56.4 32Z" fill="#3a3a40"/>
</g></g></svg>
<!-- F: orange brick wall, cream sweater -->
<svg class="avs" style="left:1270px;top:548px" width="72" height="72" viewBox="0 0 72 72"><g clip-path="url(#cc)">
<rect width="72" height="72" fill="#b98a6c"/>
<g filter="url(#b1)" opacity=".9">
<path d="M0 6 H72 M0 12 H72 M0 18 H72 M0 24 H72 M0 30 H72 M0 36 H72 M0 42 H72 M0 48 H72 M0 54 H72 M0 60 H72 M0 66 H72" stroke="#d6bca6" stroke-width="1.3"/>
<path d="M10 6 V12 M26 6 V12 M42 6 V12 M58 6 V12 M4 12 V18 M18 12 V18 M34 12 V18 M50 12 V18 M10 18 V24 M26 18 V24 M58 18 V24 M4 24 V30 M18 24 V30 M10 30 V36 M26 30 V36 M60 30 V36 M4 36 V42 M18 36 V42 M10 42 V48 M60 42 V48 M4 48 V54 M14 48 V54 M10 54 V60 M4 60 V66" stroke="#d6bca6" stroke-width="1.2"/>
<path d="M12 13 h5 v4 h-5z M36 7 h5 v4 h-5z M52 19 h5 v4 h-5z M6 31 h4 v4 h-4z M20 43 h5 v4 h-5z M44 13 h5 v4 h-5z" fill="#a5633f"/>
</g>
<g filter="url(#b3)">
<path d="M64 20 H68 V58 H64Z" fill="#ebe7df"/>
<path d="M68 22 H72 V56 H68Z" fill="#c08055"/>
<path d="M34 26 C34 17 44 14 50 18 C54 24 53 38 53 46 L40 46 C36 40 34 32 34 26Z" fill="#8d654b"/>
<path d="M35 24 C37 20 43 20 43.4 25 V32 C42.6 35 38 35.4 36.4 32 C35 29 34.6 26 35 24Z" fill="#d9ac97"/>
<path d="M28.2 23 h6.6 v8 h-6.6z" fill="#9c1018"/>
<path d="M25 34 C27 30 31 29 33.6 31 L40 34 L40 42 H27Z" fill="#dcae98"/>
<path d="M17 62 C17 48 21 40 27 38.6 L36 42 L42 38 C52 38 58 44 58 56 C58 62 54 66 50 66 L50 72 H22 L22 68 C19 68 17 66 17 62Z" fill="#ecdcc0"/>
<path d="M28 50 C32 44 40 42 44 46 M24 60 C30 66 44 66 50 58" stroke="#d6c4a4" stroke-width="1.6" fill="none"/>
</g></g></svg>


</div>

</div>
</body>
</html>
